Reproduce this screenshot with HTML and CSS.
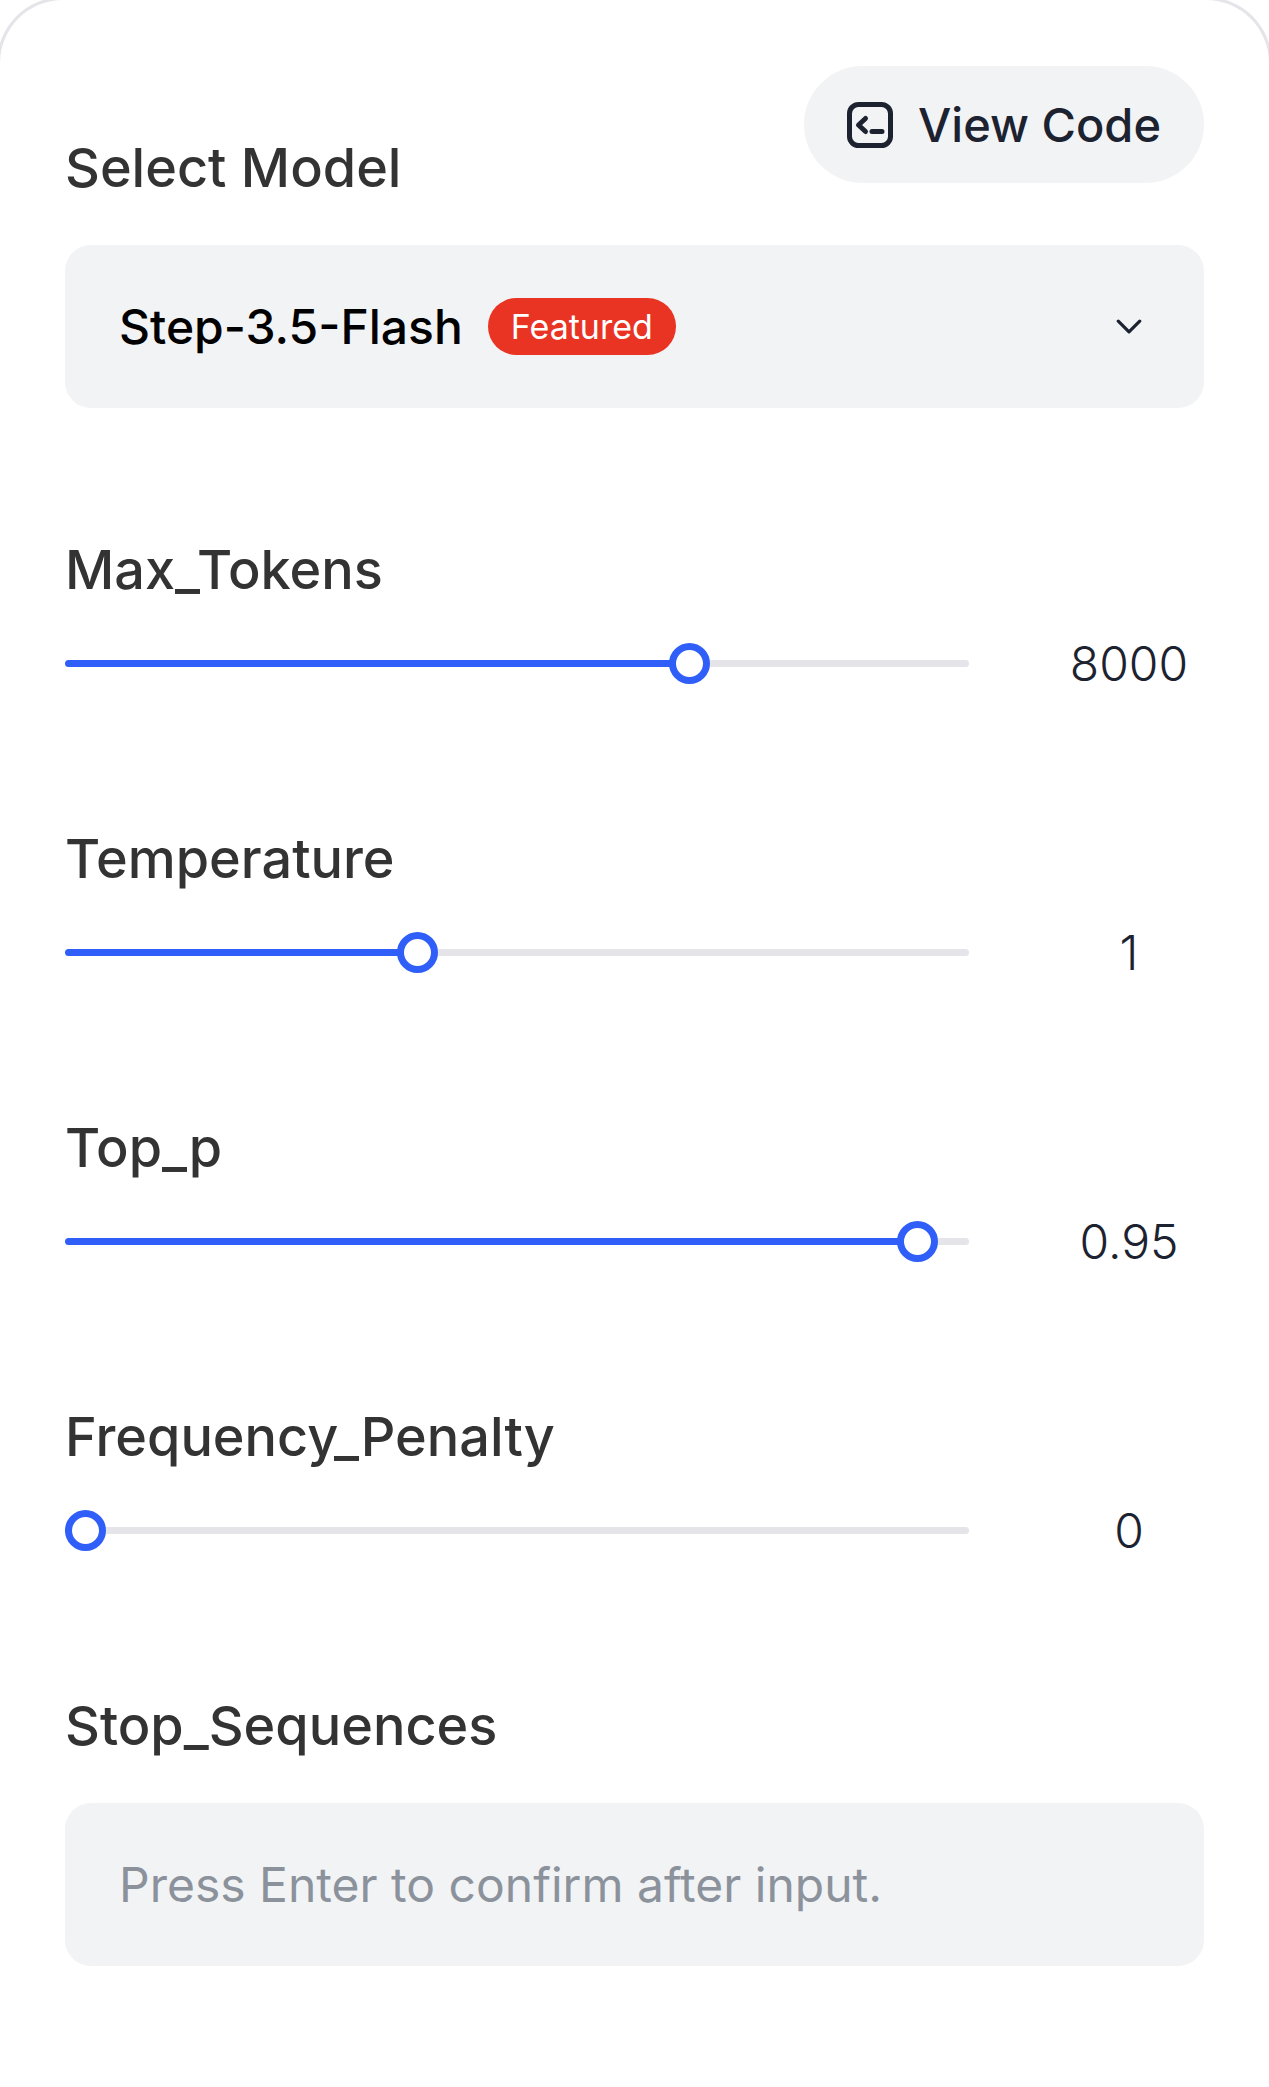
FILE: index.html
```html
<!DOCTYPE html>
<html lang="en">
<head>
    <meta charset="UTF-8">
    <meta name="viewport" content="width=device-width, initial-scale=1.0">
    <title>Model Settings</title>
    <link rel="stylesheet" href="styles.css">
</head>
<body>

    <form class="panel">
        <div class="field">
            <div class="panel-header">
                <label for="model">Select Model</label>
                <button type="button" class="code-btn">
                    <svg class="code-icon" viewBox="0 0 46 46" aria-hidden="true">
                        <rect x="2.5" y="2.5" width="41" height="41" rx="9" />
                        <path d="M18.5 16.5 L11.5 23 L18.5 29.5 M25 29.5 H35" />
                    </svg>
                    View Code
                </button>
            </div>
            <div class="box">
                <select id="model" name="model">
                    <option>Step-3.5-Flash</option>
                </select>
                <span class="badge">Featured</span>
                <svg class="chevron" viewBox="0 0 24 14" aria-hidden="true">
                    <path d="M2 2 L12 12 L22 2" />
                </svg>
            </div>
        </div>

        <div class="field">
            <label for="maxTokens">Max_Tokens</label>
            <div class="slider-row">
                <input type="range" id="maxTokens" min="0" max="11430" step="10" value="8000" style="--fill: 0.7">
                <output for="maxTokens">8000</output>
            </div>
        </div>

        <div class="field">
            <label for="temperature">Temperature</label>
            <div class="slider-row">
                <input type="range" id="temperature" min="0" max="2.6" step="0.01" value="1" style="--fill: 0.385">
                <output for="temperature">1</output>
            </div>
        </div>

        <div class="field">
            <label for="topP">Top_p</label>
            <div class="slider-row">
                <input type="range" id="topP" min="0" max="0.985" step="0.005" value="0.95" style="--fill: 0.964">
                <output for="topP">0.95</output>
            </div>
        </div>

        <div class="field">
            <label for="frequencyPenalty">Frequency_Penalty</label>
            <div class="slider-row">
                <input type="range" id="frequencyPenalty" min="0" max="1" step="0.01" value="0" style="--fill: 0">
                <output for="frequencyPenalty">0</output>
            </div>
        </div>

        <div class="field">
            <label for="stopSequences">Stop_Sequences</label>
            <input type="text" class="box stop-input" id="stopSequences" placeholder="Press Enter to confirm after input.">
        </div>
    </form>

    <script>
        document.querySelectorAll("input[type=range]").forEach(function (slider) {
            slider.addEventListener("input", function () {
                let fill = (slider.value - slider.min) / (slider.max - slider.min);
                slider.style.setProperty("--fill", fill);
                slider.nextElementSibling.value = slider.value;
            });
        });
    </script>

</body>
</html>
```
FILE: styles.css
```css
* {
    box-sizing: border-box;
}

body {
    margin: 0;
    background: #fff;
    font-family: Inter, "Liberation Sans", sans-serif;
    font-size: 48px;
    color: #1d2230;
    overflow-x: hidden;
}

.panel {
    display: flex;
    flex-direction: column;
    gap: 130px;
    min-height: calc(100vh + 3px);
    margin: -3px -3px 0;
    padding: 66px 65px 120px;
    border: 3px solid #e4e4e9;
    border-bottom: none;
    border-radius: 66px 66px 0 0;
    background: #fff;
}

.field {
    display: flex;
    flex-direction: column;
}

label {
    font-size: 54px;
    line-height: 64px;
    font-weight: 500;
    color: #333;
}

.panel-header {
    display: flex;
    justify-content: space-between;
    align-items: flex-end;
}

.code-btn {
    display: flex;
    align-items: center;
    gap: 25px;
    height: 117px;
    margin-bottom: 17px;
    padding: 0 43px;
    border: none;
    border-radius: 59px;
    background: #f2f3f5;
    color: #1d2230;
    font: inherit;
    font-size: 47px;
    font-weight: 500;
    cursor: pointer;
}

.code-icon {
    width: 46px;
    height: 46px;
    fill: none;
    stroke: currentColor;
    stroke-width: 5;
    stroke-linecap: round;
    stroke-linejoin: round;
}

.box {
    display: flex;
    align-items: center;
    width: 100%;
    height: 163px;
    margin-top: 45px;
    padding: 0 54px;
    border: none;
    border-radius: 26px;
    background: #f2f3f5;
}

select {
    appearance: none;
    field-sizing: content;
    padding: 0;
    border: none;
    background: none;
    font: inherit;
    font-weight: 500;
    color: #000;
}

.badge {
    margin-left: 25px;
    padding: 0 23px;
    border-radius: 29px;
    background: #e93323;
    color: #fff;
    font-size: 34px;
    line-height: 57px;
}

.chevron {
    width: 26px;
    height: 15px;
    margin: 0 8px 0 auto;
    fill: none;
    stroke: #1d2230;
    stroke-width: 3;
    stroke-linecap: round;
    stroke-linejoin: round;
}

.slider-row {
    display: flex;
    align-items: center;
    gap: 85px;
    height: 66px;
    margin-top: 28px;
    margin-bottom: 1px;
}

input[type="range"] {
    --stop: calc(20px + (100% - 40px) * var(--fill));
    appearance: none;
    flex: 1;
    min-width: 0;
    height: 40px;
    margin: 0;
    background: none;
    cursor: pointer;
}

input[type="range"]::-webkit-slider-runnable-track {
    height: 7px;
    border-radius: 4px;
    background: linear-gradient(to right, #2f5ff8 var(--stop), #e4e4e9 var(--stop));
}

input[type="range"]::-webkit-slider-thumb {
    appearance: none;
    width: 41px;
    height: 41px;
    margin-top: -17px;
    border: 7px solid #2f5ff8;
    border-radius: 50%;
    background: #fff;
}

output {
    width: 150px;
    font-weight: 350;
    text-align: center;
}

.stop-input {
    font: inherit;
    color: #1d2230;
}

.stop-input::placeholder {
    color: #8b929c;
    opacity: 1;
}
```
